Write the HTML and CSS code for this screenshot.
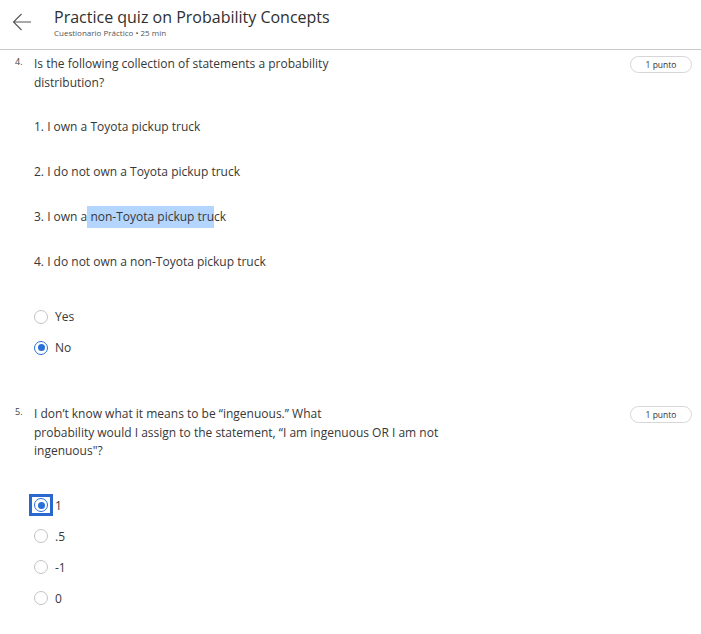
FILE: index.html
```
<!DOCTYPE html>
<html>
<head>
<meta charset="utf-8">
<link rel="stylesheet" href="styles.css">
</head>
<body>
<header class="topbar">
  <svg class="back" width="20" height="18" viewBox="0 0 20 18"><path d="M19 9H1.5M9.5 1L1.5 9l8 8" fill="none" stroke="#555" stroke-width="1.1"/></svg>
  <div class="titles">
    <div class="title">Practice quiz on Probability Concepts</div>
    <div class="subtitle">Cuestionario Práctico • 25 min</div>
  </div>
</header>
<main>
  <section class="question q4">
    <div class="qhead">
      <span class="num">4.</span>
      <div class="qtext">Is the following collection of statements a probability<br>distribution?</div>
      <span class="badge">1 punto</span>
    </div>
    <div class="items">
      <p>1. I own a Toyota pickup truck</p>
      <p>2. I do not own a Toyota pickup truck</p>
      <p>3. I own a<span class="sel"> non-Toyota pickup tru</span>ck</p>
      <p>4. I do not own a non-Toyota pickup truck</p>
    </div>
    <div class="options">
      <label class="opt"><span class="radio"></span>Yes</label>
      <label class="opt"><span class="radio on"></span>No</label>
    </div>
  </section>
  <section class="question q5">
    <div class="qhead">
      <span class="num">5.</span>
      <div class="qtext">I don’t know what it means to be “ingenuous.” What<br>probability would I assign to the statement, “I am ingenuous OR I am not<br>ingenuous"?</div>
      <span class="badge">1 punto</span>
    </div>
    <div class="options">
      <label class="opt"><span class="focus"><span class="radio on"></span></span>1</label>
      <label class="opt"><span class="radio"></span>.5</label>
      <label class="opt"><span class="radio"></span>-1</label>
      <label class="opt"><span class="radio"></span>0</label>
    </div>
  </section>
</main>
</body>
</html>
```
FILE: styles.css
```
html, body {
  margin: 0;
  padding: 0;
  background: #fff;
}
body {
  font-family: "Open Sans", "DejaVu Sans", sans-serif;
  color: #373737;
  width: 701px;
}
.topbar {
  height: 49px;
  border-bottom: 1px solid #c8c8c8;
  display: flex;
  align-items: flex-start;
}
.back {
  margin: 13px 0 0 12px;
}
.titles {
  margin: 6px 0 0 22px;
}
.title {
  font-size: 16px;
  line-height: 22px;
  color: #2f2f2f;
}
.subtitle {
  font-size: 8px;
  line-height: 10px;
  color: #555;
}
.question {
  padding-left: 15px;
  padding-right: 9px;
}
.q4 {
  padding-top: 5px;
}
.q5 {
  padding-top: 42px;
}
.qhead {
  display: flex;
  align-items: flex-start;
}
.num {
  width: 19px;
  font-size: 9px;
  line-height: 14px;
  color: #444;
}
.qtext {
  flex: 1;
  font-size: 12px;
  line-height: 18.5px;
}
.badge {
  margin-top: 1px;
  width: 60px;
  height: 15px;
  border: 1px solid #d6d6d6;
  border-radius: 9px;
  font-size: 8.5px;
  line-height: 15px;
  text-align: center;
  color: #333;
}
.items {
  padding-left: 19px;
  padding-top: 26px;
}
.items p {
  margin: 0 0 27px;
  font-size: 12px;
  line-height: 18px;
}
.sel {
  background: #b4d5fe;
  padding: 2px 0 3px;
}
.options {
  padding-left: 19px;
  padding-top: 3px;
  display: flex;
  flex-direction: column;
}
.q5 .options {
  padding-top: 29px;
}
.opt {
  height: 31px;
  display: flex;
  align-items: center;
  font-size: 12px;
  gap: 7px;
}
.radio {
  width: 12px;
  height: 12px;
  border: 1.5px solid #c4c4c4;
  border-radius: 50%;
  position: relative;
  box-sizing: content-box;
  flex: none;
}
.radio.on {
  border-color: #2a6fd8;
}
.radio.on::after {
  content: "";
  position: absolute;
  left: 2.5px;
  top: 2.5px;
  width: 7px;
  height: 7px;
  border-radius: 50%;
  background: #2a6fd8;
}
.focus {
  margin: 0 -5px 0 -5px;
  padding: 1px 2px;
  border: 3px solid #2a68cf;
  display: flex;
  flex: none;
}
```
